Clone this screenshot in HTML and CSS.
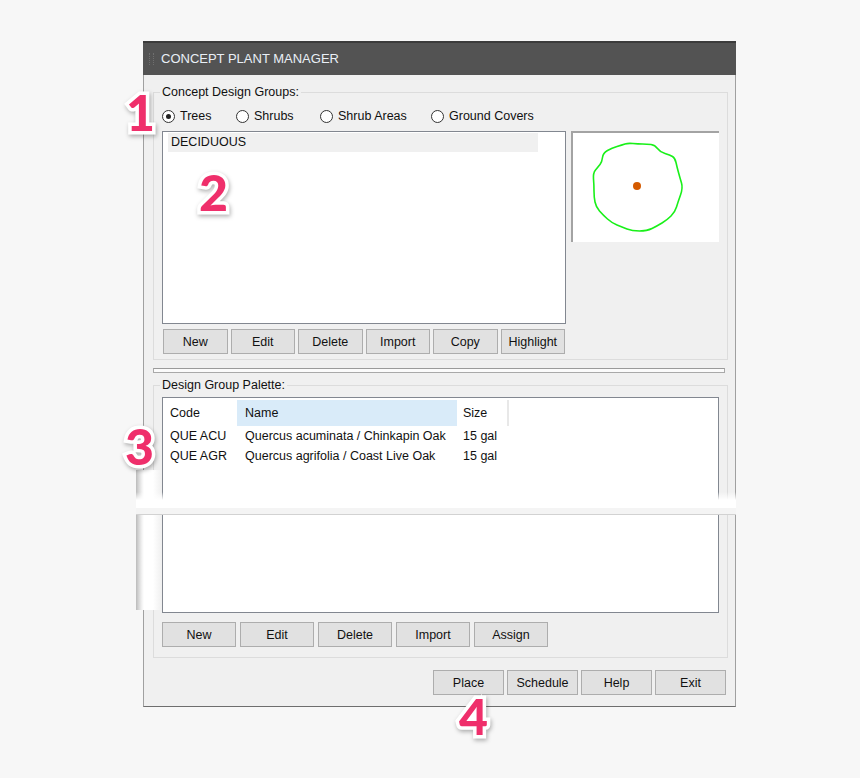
FILE: index.html
```html
<!DOCTYPE html>
<html lang="en">
<head>
<meta charset="UTF-8">
<title>Concept Plant Manager</title>
<link rel="stylesheet" href="styles.css">
</head>
<body>
<div class="dialog">
  <div class="titlebar"><span class="grip"></span>CONCEPT PLANT MANAGER</div>
  <div class="dialog-body">

    <div class="group group-top">
      <span class="group-label">Concept Design Groups:</span>
      <div class="radio-row">
        <label class="radio"><span class="dot checked"></span>Trees</label>
        <label class="radio"><span class="dot"></span>Shrubs</label>
        <label class="radio"><span class="dot"></span>Shrub Areas</label>
        <label class="radio"><span class="dot"></span>Ground Covers</label>
      </div>
      <div class="group-main">
        <div class="left-col">
          <div class="listbox">
            <div class="list-item selected">DECIDUOUS</div>
          </div>
          <div class="btn-row six">
            <button class="btn">New</button>
            <button class="btn">Edit</button>
            <button class="btn">Delete</button>
            <button class="btn">Import</button>
            <button class="btn">Copy</button>
            <button class="btn">Highlight</button>
          </div>
        </div>
        <div class="preview">
          <svg width="146" height="109" viewBox="2 1 146 109">
            <path fill="none" stroke="#19f019" stroke-width="1.6"
              d="M31.5,25.5 Q32,21 36.5,18.5 Q41,16 46,14.5 Q51,13 54,12 Q57,11 62,11.5 Q67,12 71.5,12 Q76,12 80,12.5 Q84,13 86.5,16.5 Q89,20 94,21.5 Q99,23 101.5,24.5 Q104,26 105,30.5 Q106,35 107.5,40.5 Q109,46 110.5,51 Q112,56 109.5,63 Q107,70 105.5,75 Q104,80 100,84 Q96,88 91,91 Q86,94 81,96.5 Q76,99 68.5,99 Q61,99 56,97 Q51,95 46,93 Q41,91 36.5,87 Q32,83 28.5,79 Q25,75 24,70 Q23,65 23,59 Q23,53 22.5,47 Q22,41 24.5,38 Q27,35 29,32.5 Q31,30 31.5,25.5 Z"/>
            <circle cx="66" cy="54" r="4" fill="#d45a00"/>
          </svg>
        </div>
      </div>
    </div>

    <div class="splitter"></div>

    <div class="group group-palette">
      <span class="group-label">Design Group Palette:</span>
      <div class="listview">
        <div class="lv-head">
          <div class="lv-cell col-code">Code</div>
          <div class="lv-cell col-name sorted">Name</div>
          <div class="lv-cell col-size">Size</div>
        </div>
        <div class="lv-row">
          <div class="lv-cell col-code">QUE ACU</div>
          <div class="lv-cell col-name">Quercus acuminata / Chinkapin Oak</div>
          <div class="lv-cell col-size">15 gal</div>
        </div>
        <div class="lv-row">
          <div class="lv-cell col-code">QUE AGR</div>
          <div class="lv-cell col-name">Quercus agrifolia / Coast Live Oak</div>
          <div class="lv-cell col-size">15 gal</div>
        </div>
      </div>
      <div class="btn-row five">
        <button class="btn">New</button>
        <button class="btn">Edit</button>
        <button class="btn">Delete</button>
        <button class="btn">Import</button>
        <button class="btn">Assign</button>
      </div>
    </div>

    <div class="btn-row footer">
      <button class="btn">Place</button>
      <button class="btn">Schedule</button>
      <button class="btn">Help</button>
      <button class="btn">Exit</button>
    </div>
  </div>
</div>

<!-- the torn strip in the screenshot -->
<div class="tear-side"></div>
<div class="tear-band"></div>

<span class="marker m1">1</span>
<span class="marker m2">2</span>
<span class="marker m3">3</span>
<span class="marker m4">4</span>
</body>
</html>
```

FILE: styles.css
```css
body {
  margin: 0;
  background-color: #f7f7f7;
  font-family: 'Liberation Sans', Arial, sans-serif;
  font-size: 12.5px;
  color: #111;
  position: relative;
  height: 778px;
  overflow: hidden;
}
.dialog {
  margin: 41px 0 0 143px;
  width: 593px;
}
.titlebar {
  height: 32px;
  border-top: 2px solid #3b3b3b;
  background-color: #535353;
  color: #e9eff6;
  font-size: 13px;
  line-height: 32px;
  padding-left: 6px;
  display: flex;
  align-items: center;
}
.grip {
  width: 3px;
  height: 12px;
  margin-right: 7px;
  border-left: 1px dotted #6f6f6f;
  border-right: 1px dotted #6f6f6f;
}
.dialog-body {
  background-color: #f0f0f0;
  border: 1px solid #a0a0a0;
  border-top: none;
  border-bottom-color: #6e6e6e;
  padding: 17px 7px 11px 9px;
}
.group {
  position: relative;
  border: 1px solid #dcdcdc;
  padding: 17px 8px 5px 8px;
}
.group-label {
  position: absolute;
  top: -8px;
  left: 6px;
  padding: 0 2px;
  background-color: #f0f0f0;
  line-height: 15px;
}
.radio-row {
  display: grid;
  grid-template-columns: 74px 84px 111px auto;
  height: 13px;
  line-height: 13px;
  margin-bottom: 8px;
}
.radio {
  display: flex;
  align-items: center;
}
.dot {
  width: 11px;
  height: 11px;
  border: 1px solid #333;
  border-radius: 50%;
  background-color: #fff;
  margin-right: 5px;
  position: relative;
}
.dot.checked::after {
  content: '';
  position: absolute;
  left: 3px;
  top: 3px;
  width: 5px;
  height: 5px;
  border-radius: 50%;
  background-color: #222;
}
.group-main {
  display: flex;
  gap: 5px;
}
.listbox {
  width: 402px;
  height: 190px;
  background-color: #fff;
  border: 1px solid #828790;
  padding-top: 1px;
}
.list-item {
  width: 367px;
  height: 19px;
  line-height: 19px;
  margin-left: 5px;
  padding-left: 3px;
}
.list-item.selected {
  background-color: #f0f0f0;
}
.preview {
  width: 146px;
  height: 109px;
  background-color: #fff;
  border-top: 2px solid #a3a3a3;
  border-left: 2px solid #a3a3a3;
}
.preview svg {
  display: block;
}
.btn-row {
  display: grid;
  gap: 3px;
  margin-top: 5px;
}
.btn-row.six {
  grid-template-columns: repeat(6, 1fr);
  width: 402px;
  margin-left: 1px;
}
.btn-row.five {
  grid-template-columns: repeat(5, 74px);
  gap: 4px;
  margin-top: 9px;
  margin-bottom: 5px;
}
.btn-row.footer {
  grid-template-columns: repeat(4, 71px);
  justify-content: end;
  margin-top: 12px;
  margin-right: 2px;
}
.btn {
  height: 25px;
  padding: 0;
  font-family: inherit;
  font-size: 12.5px;
  color: #111;
  background-color: #e1e1e1;
  border: 1px solid #adadad;
  border-radius: 0;
}
.splitter {
  width: 570px;
  height: 3px;
  margin: 8px 0 12px;
  border: 1px solid #a9a9a9;
  border-top-color: #9a9a9a;
  background-color: #fbfbfb;
}
.group-palette {
  padding-top: 11px;
}
.listview {
  width: 555px;
  height: 214px;
  background-color: #fff;
  border: 1px solid #828790;
}
.lv-head,
.lv-row {
  display: flex;
}
.lv-head {
  height: 26px;
  line-height: 26px;
  padding-top: 2px;
}
.lv-row {
  height: 20px;
  line-height: 20px;
}
.lv-cell {
  white-space: nowrap;
}
.col-code {
  width: 67px;
  padding-left: 7px;
}
.col-name {
  width: 212px;
  padding-left: 8px;
}
.col-size {
  width: 44px;
  padding-left: 6px;
}
.lv-head .col-size {
  border-right: 2px solid #e8e8e8;
}
.col-name.sorted {
  background-color: #d9ebf9;
}
.tear-side {
  position: absolute;
  left: 136px;
  top: 470px;
  width: 25px;
  height: 140px;
  background: linear-gradient(to right, #bbb 0, #d9d9d9 3px, #f3f3f3 6px, #fff 8px, #fff 17px, #f1f1f1 25px);
}
.tear-band {
  position: absolute;
  left: 136px;
  top: 492px;
  width: 600px;
  height: 22px;
  background: linear-gradient(to bottom, rgba(255, 255, 255, 0) 0, #fff 8px, #fff 16px, #f4f4f4 16px);
  border-bottom: 1px solid #d2d2d2;
}
.marker {
  position: absolute;
  font-family: Lato, 'DejaVu Sans', sans-serif;
  font-weight: 900;
  font-size: 50px;
  line-height: 0.8;
  color: #ef2f6b;
  -webkit-text-stroke: 7px #fff;
  paint-order: stroke fill;
  filter: drop-shadow(1px 2px 2px rgba(0, 0, 0, 0.3));
}
.m1 { left: 126px; top: 92px; }
.m2 { left: 199px; top: 172px; }
.m3 { left: 125px; top: 426px; }
.m4 { left: 459px; top: 696px; }
```
